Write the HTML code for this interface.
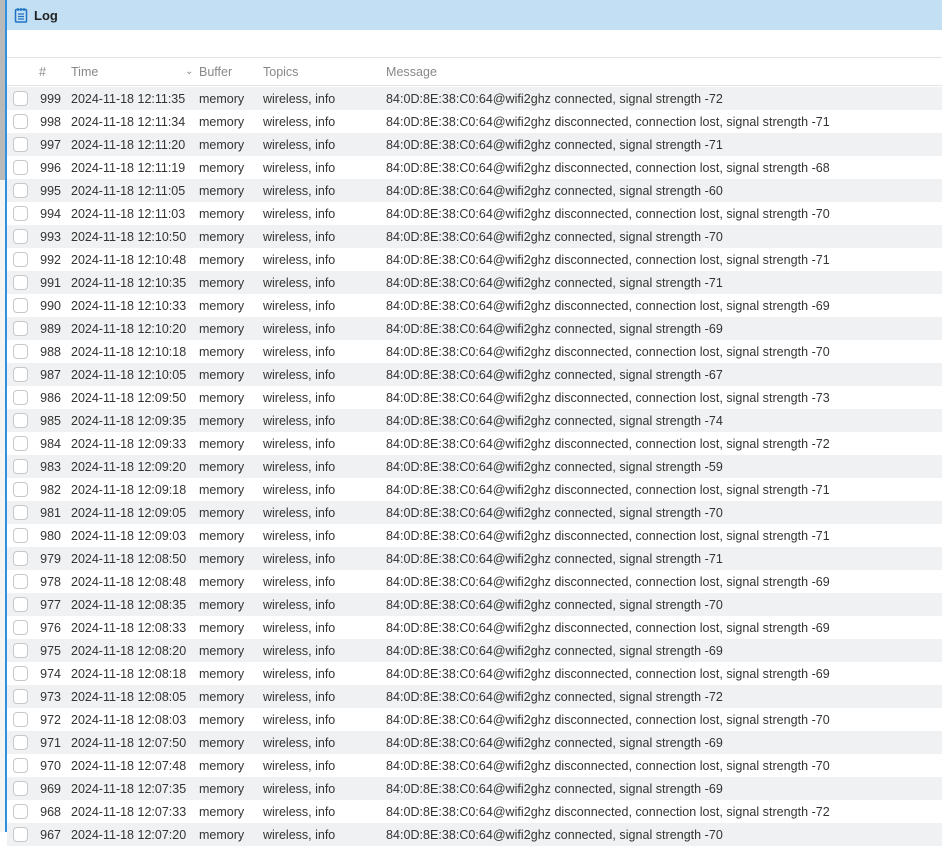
<!DOCTYPE html>
<html><head><meta charset="utf-8"><style>
*{margin:0;padding:0;box-sizing:border-box}
body{width:942px;height:832px;overflow:hidden;background:#fff;font-family:"Liberation Sans",sans-serif;font-size:12.5px;color:#333;position:relative}
#left{position:absolute;left:0;top:0;width:6px;height:832px;background:#f4f4f4}
#left .g{position:absolute;left:0;top:0;width:6px;height:180px;background:#b9b9b9}
#left .l{position:absolute;left:5px;top:0;width:2px;height:832px;background:#2f8fe0}
#main{position:absolute;left:7px;top:0;right:0;height:832px}
#hdr{height:30px;background:#c3dff3;display:flex;align-items:center;padding-left:7px;font-weight:bold;font-size:13px;color:#222}
#hdr svg{margin-right:6px}
#bar{height:28px;border-bottom:1px solid #e3e3e3}
.row{height:23px;display:flex;align-items:center;white-space:nowrap;position:relative}
.row.g{background:#f0f1f2}
.th{height:28px;color:#888;border-bottom:1px solid #e3e3e3}
#rows{margin-top:1px}
.cb{position:absolute;left:6px;top:4px;width:15px;height:15px;border:1px solid #c8c8c8;border-radius:4px;background:#fff}
.n{position:absolute;left:20px;width:34px;text-align:right}
.t{position:absolute;left:64px}
.b{position:absolute;left:192px}
.p{position:absolute;left:256px}
.m{position:absolute;left:379px;letter-spacing:0.03px}
</style></head><body>
<div id="left"><div class="g"></div><div class="l"></div></div>
<div id="main">
<div id="hdr"><svg width="14" height="16" viewBox="0 0 14 16"><rect x="1.5" y="2.5" width="11" height="12.5" rx="1" fill="none" stroke="#1f74c4" stroke-width="1.5"/><path d="M4 1v3M7 1v3M10 1v3M4 7h6M4 9.5h6M4 12h6" stroke="#1f74c4" stroke-width="1.3"/></svg>Log</div>
<div id="bar"></div>
<div class="row th"><span class="n" style="text-align:left;left:32px">#</span><span class="t">Time</span><span style="position:absolute;left:178px;font-size:10px">&#8964;</span><span class="b">Buffer</span><span class="p">Topics</span><span class="m">Message</span></div>
<div id="rows"></div>
</div>
<script>
var d=[["999","12:11:35",0,72],["998","12:11:34",1,71],["997","12:11:20",0,71],["996","12:11:19",1,68],["995","12:11:05",0,60],["994","12:11:03",1,70],["993","12:10:50",0,70],["992","12:10:48",1,71],["991","12:10:35",0,71],["990","12:10:33",1,69],["989","12:10:20",0,69],["988","12:10:18",1,70],["987","12:10:05",0,67],["986","12:09:50",1,73],["985","12:09:35",0,74],["984","12:09:33",1,72],["983","12:09:20",0,59],["982","12:09:18",1,71],["981","12:09:05",0,70],["980","12:09:03",1,71],["979","12:08:50",0,71],["978","12:08:48",1,69],["977","12:08:35",0,70],["976","12:08:33",1,69],["975","12:08:20",0,69],["974","12:08:18",1,69],["973","12:08:05",0,72],["972","12:08:03",1,70],["971","12:07:50",0,69],["970","12:07:48",1,70],["969","12:07:35",0,69],["968","12:07:33",1,72],["967","12:07:20",0,70]];
var h="";d.forEach(function(r,i){h+='<div class="row'+(i%2==0?' g':'')+'"><span class="cb"></span><span class="n">'+r[0]+'</span><span class="t">2024-11-18 '+r[1]+'</span><span class="b">memory</span><span class="p">wireless, info</span><span class="m">84:0D:8E:38:C0:64@wifi2ghz '+(r[2]?'disconnected, connection lost, ':'connected, ')+'signal strength -'+r[3]+'</span></div>';});
document.getElementById("rows").innerHTML=h;
</script>
</body></html>
